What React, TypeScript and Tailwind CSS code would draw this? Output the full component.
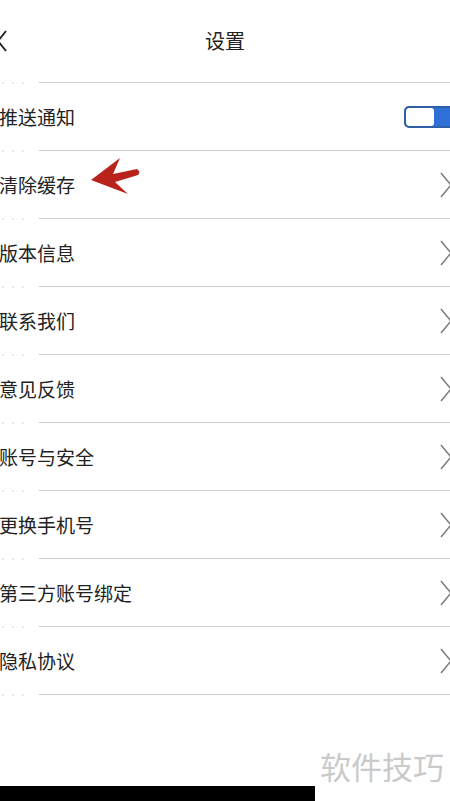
import React from "react";

const items = [
  "推送通知",
  "清除缓存",
  "版本信息",
  "联系我们",
  "意见反馈",
  "账号与安全",
  "更换手机号",
  "第三方账号绑定",
  "隐私协议",
];

const Divider = () => (
  <div className="flex h-px items-center">
    <div className="flex w-[39px] items-center gap-[8px] pl-[2px]">
      <span className="h-[2px] w-[2px] rounded-full bg-[#e2e2e2]" />
      <span className="h-[2px] w-[2px] rounded-full bg-[#e2e2e2]" />
      <span className="h-[2px] w-[2px] rounded-full bg-[#e2e2e2]" />
    </div>
    <div className="h-px flex-1 bg-[#cfcfcf]" />
  </div>
);

const Chevron = () => (
  <svg width="12" height="26" viewBox="0 0 12 26" className="shrink-0">
    <path d="M1 1 L11 13 L1 25" fill="none" stroke="#7a7a7a" strokeWidth="1.5" />
  </svg>
);

const Toggle = () => (
  <div className="flex h-[22px] w-[50px] shrink-0 items-stretch overflow-hidden rounded-[5px] border-[2.5px] border-[#2f5fa8] bg-[#2f6fd8]">
    <div className="w-[28px] rounded-[3px] bg-white" />
  </div>
);

export default function App() {
  return (
    <div
      className="relative flex h-[801px] w-[450px] flex-col overflow-hidden bg-white text-[#222]"
      style={{ fontFamily: '"Noto Sans CJK SC", "Noto Sans", sans-serif' }}
    >
      <div className="relative flex h-[82px] items-center justify-center">
        <svg width="10" height="22" viewBox="0 0 10 22" className="absolute left-[-3px] top-[30px]">
          <path d="M9 1 L1 11 L9 21" fill="none" stroke="#222" strokeWidth="2" />
        </svg>
        <span className="text-[20px] leading-none">设置</span>
      </div>

      {items.map((label, i) => (
        <div key={label}>
          <Divider />
          <div className="flex h-[67px] items-center justify-between pl-[-1px]">
            <span className="ml-[-1px] text-[19px] leading-none">{label}</span>
            {i === 0 ? (
              <div className="mr-[-4px]">
                <Toggle />
              </div>
            ) : (
              <div className="mr-[-2px]">
                <Chevron />
              </div>
            )}
          </div>
        </div>
      ))}
      <Divider />

      <div className="flex-1" />
      <div className="h-[15px] w-[315px] bg-black" />

      <span className="absolute left-[320px] top-[750px] text-[31px] leading-none text-[#cacaca]">
        软件技巧
      </span>

      <svg width="60" height="45" viewBox="0 0 60 45" className="absolute left-[85px] top-[155px]">
        <path
          d="M6 25 L35 3 L28 19 L52 14 Q56 17 53 20 L30 27 L43 39 Z"
          fill="#b8231b"
        />
      </svg>
    </div>
  );
}
